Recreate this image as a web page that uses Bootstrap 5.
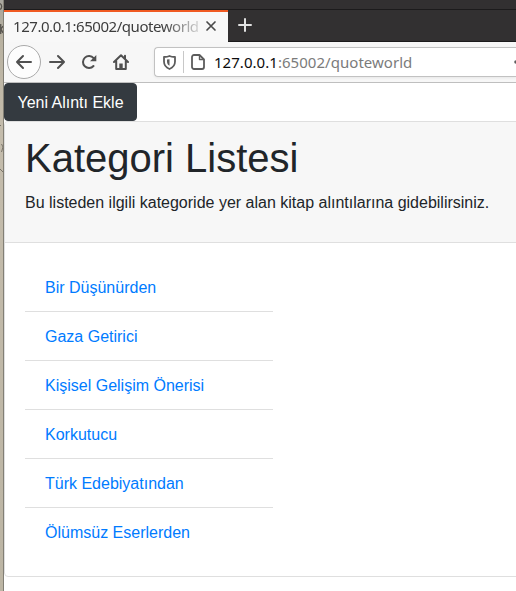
<!DOCTYPE html>
<html lang="tr">
<head>
<meta charset="utf-8">
<title>Kategori Listesi</title>
<link href="https://cdn.jsdelivr.net/npm/bootstrap@5.3.0/dist/css/bootstrap.min.css" rel="stylesheet">
<style>
body{font-family:"Liberation Sans",Arial,sans-serif;color:#212529;height:591px;overflow:hidden}
.desk-edge{width:4px;flex:none;background:linear-gradient(#a8a69d,#b9b2a1 40px,#c4bcac 130px,#bcb5a4);border-right:1px solid #827f75}
.win{min-width:0}
.titlebar{height:10px;background:#323031;border-bottom:1px solid #1c1b1c}
.tabstrip{height:32px;background:#323031;border-bottom:1px solid #1c1b1c}
.tab-active{width:224px;height:32px;background:#f8f8f8;border-top:2px solid #f05a22;padding-left:9px;padding-bottom:2px;color:#3d3d3d;font:15px/28px "Noto Sans",sans-serif}
.tab-label{width:188px;white-space:nowrap;letter-spacing:-.45px;-webkit-mask-image:linear-gradient(90deg,#000 150px,transparent 194px);mask-image:linear-gradient(90deg,#000 150px,transparent 194px)}
.toolbar{height:41px;background:#f7f7f7;border-bottom:1px solid #bfbfbf}
.back-btn{width:34px;height:34px;margin-left:3px;border:1px solid #aaa;background:#fdfdfd}
.nav-ico{margin-left:16px}
.urlbar{height:30px;margin-left:25px;border:1px solid #c2c2c2;border-right:0;border-radius:4px 0 0 4px;background:#fff;box-shadow:0 1px 3px #0001;font:15px/28px "Noto Sans",sans-serif;color:#7b7b7b;overflow:hidden}
.url-sep{width:1px;height:22px;background:#c8c8c8;margin:0 7px}
.url-text{letter-spacing:.04px;white-space:nowrap;padding-left:9px}
.url-text b{font-weight:400;color:#0c0c0d}
svg{display:block;flex:none}
.btn-quote{--bs-btn-bg:#343a40;--bs-btn-border-color:#343a40;--bs-btn-color:#fff;--bs-btn-border-radius:4px;width:133px;height:38px;padding:7px 0 5px}
.quote-card{--bs-card-border-color:#dfdfdf;--bs-card-border-radius:4px;--bs-card-inner-border-radius:3px;--bs-card-cap-bg:#f7f7f7;width:520px;flex:none}
.quote-card .card-header{padding:12px 20px 11px}
.quote-card .card-header p{padding-top:1px}
.quote-card .card-body{padding:20px}
.quote-card h1{font-size:40px}
.cat-list{width:248px;--bs-list-group-border-color:#dfdfdf}
.cat-list .list-group-item{padding:13px 20px 11px}
.cat-list a{color:#007bff}
</style>
<script src="https://cdn.jsdelivr.net/npm/bootstrap@5.3.0/dist/js/bootstrap.bundle.min.js"></script>
</head>
<body class="d-flex">
<div class="desk-edge">
  <svg width="3" height="190" viewBox="0 0 3 190" fill="none" stroke="#57544e"><path d="M0 3.500a3.500 3.500 0 0 1 0 6M.7 24v10M3 26l-2 3 2 4" stroke-width="1.300"/><path d="M0 125.500h1M1.500 144l1.500 3-1.500 5M0 169l3 3" stroke="#7a7469"/></svg>
</div>
<div class="win flex-grow-1 d-flex flex-column overflow-hidden">
  <div class="titlebar flex-shrink-0"></div>
  <div class="tabstrip d-flex flex-shrink-0">
    <div class="tab-active d-flex align-items-center">
      <div class="tab-label">127.0.0.1:65002/quoteworld</div>
      <svg class="ms-1" width="12" height="12" viewBox="0 0 12 12" stroke="#4a4a4a" stroke-width="1.7" stroke-linecap="round"><path d="M2 2l8 8M10 2l-8 8"/></svg>
    </div>
    <svg class="ms-2 mt-2" width="18" height="16" viewBox="0 0 18 16" stroke="#e2e2e2" stroke-width="2" stroke-linecap="round"><path d="M3 7h12M9 1v12"/></svg>
  </div>
  <div class="toolbar d-flex align-items-center flex-shrink-0">
    <div class="back-btn rounded-circle d-flex align-items-center justify-content-center">
      <svg width="18" height="16" viewBox="0 0 18 16" fill="none" stroke="#505050" stroke-width="2" stroke-linecap="round" stroke-linejoin="round"><path d="M16 8H2M8 2L2 8l6 6"/></svg>
    </div>
    <svg class="ms-2" width="16" height="16" viewBox="0 0 16 16" fill="none" stroke="#505050" stroke-width="2" stroke-linecap="round" stroke-linejoin="round"><path d="M1 8h14M9 2l6 6-6 6"/></svg>
    <svg class="nav-ico" width="16" height="16" viewBox="0 0 16 16" fill="none" stroke="#505050" stroke-width="2" stroke-linecap="round"><path d="M12.500 12A6 6 0 1 1 12.600 4.200"/><path d="M15.300 1v6.200H9z" fill="#505050" stroke="none"/></svg>
    <svg class="nav-ico" width="16" height="16" viewBox="0 0 16 16" fill="none" stroke="#505050" stroke-width="2" stroke-linecap="round" stroke-linejoin="round"><path d="M1 8l7-6.700L15 8M3.200 7v8h9.600V7M12 1.800v3"/><path d="M6.300 14V9.500h3.400V14z" fill="#505050" stroke="none"/></svg>
    <div class="urlbar flex-grow-1 d-flex align-items-center">
      <svg class="ms-2" width="13" height="15" viewBox="0 0 13 15" fill="none" stroke="#5c5c5c" stroke-width="1.800" stroke-linejoin="round"><path d="M6.500 1C5 1.800 3 2 1 2v4.500C1 10 3 12.500 6.500 14 10 12.500 12 10 12 6.500V2C10 2 8 1.800 6.500 1z"/><path d="M6.500 4.200V10.800C4.700 9.800 4 8.500 4 6.500V4.600z" fill="#5c5c5c" stroke="none"/></svg>
      <div class="url-sep"></div>
      <svg width="14" height="16" viewBox="0 0 14 16" fill="none" stroke="#5c5c5c" stroke-width="1.800" stroke-linejoin="round"><path d="M3 1h5.500L13 5.500V13a2 2 0 0 1-2 2H3a2 2 0 0 1-2-2V3a2 2 0 0 1 2-2z"/><path d="M8.500 1v4.500H13" stroke-width="1.400"/></svg>
      <div class="url-text flex-grow-1"><b>127.0.0.1</b>:65002/quoteworld</div>
      <svg width="2" height="4" viewBox="0 0 2 4"><circle cx="2" cy="2" r="1.800" fill="#5c5c5c"/></svg>
    </div>
  </div>
  <main class="bg-white">
    <a class="btn btn-quote d-block" role="button">Yeni Alıntı Ekle</a>
    <div class="card quote-card">
      <div class="card-header">
        <h1 class="mb-2">Kategori Listesi</h1>
        <p class="mb-3">Bu listeden ilgili kategoride yer alan kitap alıntılarına gidebilirsiniz.</p>
      </div>
      <div class="card-body">
        <ul class="list-group list-group-flush cat-list">
          <li class="list-group-item"><a class="text-decoration-none" href="#">Bir Düşünürden</a></li>
          <li class="list-group-item"><a class="text-decoration-none" href="#">Gaza Getirici</a></li>
          <li class="list-group-item"><a class="text-decoration-none" href="#">Kişisel Gelişim Önerisi</a></li>
          <li class="list-group-item"><a class="text-decoration-none" href="#">Korkutucu</a></li>
          <li class="list-group-item"><a class="text-decoration-none" href="#">Türk Edebiyatından</a></li>
          <li class="list-group-item"><a class="text-decoration-none" href="#">Ölümsüz Eserlerden</a></li>
        </ul>
      </div>
    </div>
  </main>
</div>
</body>
</html>
